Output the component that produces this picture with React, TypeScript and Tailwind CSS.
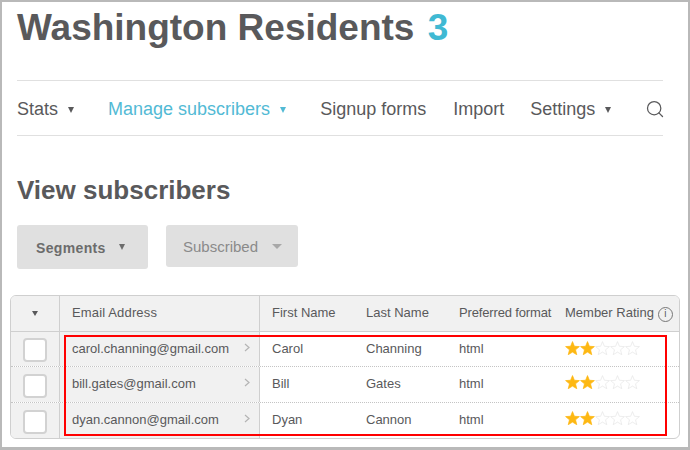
import { Search } from 'lucide-react'

const rows = [
  { email: 'carol.channing@gmail.com', first: 'Carol', last: 'Channing', h: 'h-[35px]', text: '', stars: 'mb-[3px]' },
  { email: 'bill.gates@gmail.com', first: 'Bill', last: 'Gates', h: 'h-[36px]', text: 'pb-[2px]', stars: 'mb-[5px]' },
  { email: 'dyan.cannon@gmail.com', first: 'Dyan', last: 'Cannon', h: 'h-[35px]', text: 'pb-[2px]', stars: 'mb-[5px]' },
]

const cols = 'grid grid-cols-[48px_1px_199px_1px_106px_93px_106px_1fr]'

function Caret({ className }: { className: string }) {
  return <span className={`inline-block h-0 w-0 shrink-0 border-x-[3.5px] border-t-[6px] border-x-transparent ${className}`} />
}

function Star({ filled }: { filled: boolean }) {
  return (
    <svg width="15" height="14" viewBox="0 0 24 23" className="shrink-0">
      <path
        d="M12 1l3.1 7.6 8.2.6-6.3 5.3 2 8-7-4.3-7 4.3 2-8L.7 9.2l8.2-.6z"
        fill={filled ? '#fdb813' : '#ffffff'}
        stroke={filled ? '#fdb813' : '#e6e6e6'}
        strokeWidth="1.2"
      />
    </svg>
  )
}

export default function App() {
  return (
    <div className="relative h-[450px] w-[690px] overflow-hidden border-x-2 border-t-2 border-b-[3px] border-[#b9b9b9] bg-white font-['Liberation_Sans',Arial,sans-serif] text-[#59595b]">
      <div className="pl-[15px] pr-[25px]">
        <h1 className="h-[78px] pt-[3px] text-[37px] leading-[46px] font-bold whitespace-nowrap">
          Washington Residents <span className="ml-[3px] text-[#40b9d3]">3</span>
        </h1>

        <nav className="flex h-[56px] items-center border-y border-[#e0e0e0] pt-[3px] text-[18px] whitespace-nowrap">
          <span>Stats</span>
          <Caret className="ml-[10px] border-t-[#59595b]" />
          <span className="ml-[34px] text-[#52bad5]">Manage subscribers</span>
          <Caret className="ml-[10px] border-t-[#52bad5]" />
          <span className="ml-[34px]">Signup forms</span>
          <span className="ml-[27px]">Import</span>
          <span className="ml-[26px]">Settings</span>
          <Caret className="ml-[10px] border-t-[#59595b]" />
          <Search className="mb-[2px] ml-[34px] size-[20px] shrink-0 text-[#59595b]" strokeWidth={1.5} />
        </nav>

        <h2 className="mt-[38px] text-[26px] leading-[32px] font-bold">View subscribers</h2>

        <div className="mt-[19px] flex items-start gap-[18px]">
          <div className="flex h-[44px] w-[131px] items-center rounded-[3px] bg-[#e0e0e0] pt-[2px] pl-[19px] text-[14px] font-bold tracking-[0.35px] text-[#6c6c6c]">
            Segments
            <Caret className="mb-[2px] ml-[13px] border-t-[#6c6c6c]" />
          </div>
          <div className="flex h-[42px] w-[132px] items-center rounded-[3px] bg-[#e0e0e0] pt-[2px] pl-[17px] text-[15px] text-[#8a8a8a]">
            Subscribed
            <span className="mb-[2px] ml-[14px] inline-block h-0 w-0 border-x-[5px] border-t-[5px] border-x-transparent border-t-[#a8a8a8]" />
          </div>
        </div>
      </div>

      <div className="mx-[8px] mt-[26px] overflow-hidden rounded-[6px] border border-[#cfcfcf] text-[13px]">
        <div className={`${cols} h-[36px] items-center border-b border-[#cfcfcf] bg-[#f1f1f1]`}>
          <div className="flex justify-center">
            <span className="inline-block h-0 w-0 border-x-[3px] border-t-[5px] border-x-transparent border-t-[#59595b]" />
          </div>
          <div className="h-full bg-[#cfcfcf]" />
          <div className="pb-[2px] pl-[12px] tracking-[0.15px]">Email Address</div>
          <div className="h-full bg-[#cfcfcf]" />
          <div className="pb-[2px] pl-[12px]">First Name</div>
          <div className="pb-[2px]">Last Name</div>
          <div className="pb-[2px] tracking-[-0.15px] whitespace-nowrap">Preferred format</div>
          <div className="flex items-center gap-[4px] pb-[2px] whitespace-nowrap">
            Member Rating
            <span className="mt-[3px] flex size-[15px] shrink-0 items-center justify-center rounded-full border border-[#777] text-[10px] leading-none">i</span>
          </div>
        </div>

        {rows.map((row, i) => (
          <div key={row.email} className={`${cols} ${row.h} items-center ${i < 2 ? 'border-b border-dotted border-[#c4c4c4]' : ''}`}>
            <div className="flex h-full items-center justify-center bg-[#f1f1f1] pt-[2px]">
              <span className="size-[24px] rounded-[4px] border-2 border-[#d2d2d2] bg-white" />
            </div>
            <div className="h-full bg-[#cfcfcf]" />
            <div className={`flex h-full items-center justify-between bg-[#f1f1f1] pr-[9px] pl-[12px] ${row.text}`}>
              {row.email}
              <svg width="6" height="9" viewBox="0 0 6 9" className="mb-[3px]">
                <path d="M1 1l4 3.5L1 8" fill="none" stroke="#b4b4b4" strokeWidth="1.2" />
              </svg>
            </div>
            <div className="h-full bg-[#cfcfcf]" />
            <div className={`pl-[12px] ${row.text}`}>{row.first}</div>
            <div className={row.text}>{row.last}</div>
            <div className={row.text}>html</div>
            <div className={`flex ${row.stars}`}>
              {[0, 1, 2, 3, 4].map((n) => (
                <Star key={n} filled={n < 2} />
              ))}
            </div>
          </div>
        ))}
      </div>

      {/* red annotation drawn over the screenshot */}
      <div className="pointer-events-none absolute top-[333px] left-[62px] h-[101px] w-[603px] border-2 border-[#ff0000]" />
    </div>
  )
}
